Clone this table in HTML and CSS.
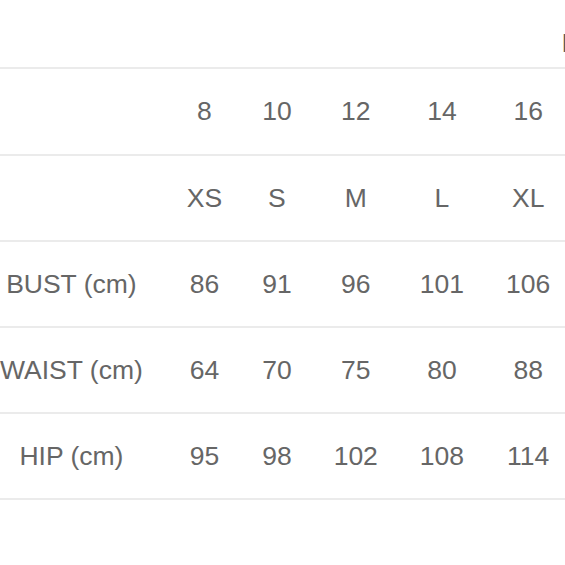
FILE: index.html
```html
<!DOCTYPE html>
<html lang="en">
<head>
<meta charset="utf-8">
<title>Size chart</title>
<link rel="stylesheet" href="styles.css">
</head>
<body>
<div class="viewport">
  <div class="chart-head"><span class="chart-title">International sizes</span></div>
  <table class="size-table">
    <tbody>
      <tr><td class="label"></td><td class="col-xs">8</td><td>10</td><td>12</td><td>14</td><td>16</td></tr>
      <tr><td class="label"></td><td class="col-xs">XS</td><td>S</td><td>M</td><td>L</td><td>XL</td></tr>
      <tr><td class="label">BUST (cm)</td><td class="col-xs">86</td><td>91</td><td>96</td><td>101</td><td>106</td></tr>
      <tr><td class="label">WAIST (cm)</td><td class="col-xs">64</td><td>70</td><td>75</td><td>80</td><td>88</td></tr>
      <tr><td class="label">HIP (cm)</td><td class="col-xs">95</td><td>98</td><td>102</td><td>108</td><td>114</td></tr>
    </tbody>
  </table>
</div>
</body>
</html>
```
FILE: styles.css
```css
html, body {
  margin: 0;
  padding: 0;
  background: #ffffff;
}
.viewport {
  width: 565px;
  height: 565px;
  overflow: hidden;
  font-family: "Liberation Sans", Arial, sans-serif;
  color: #666666;
}
.chart-head {
  height: 69px;
  border-bottom: 2px solid #ebebeb;
  display: flex;
  align-items: flex-start;
  padding: 30px 0 0 562px;
  white-space: nowrap;
  width: 800px;
  box-sizing: border-box;
}
.chart-title {
  font-size: 26.5px;
  font-weight: bold;
  color: #5a5a5a;
  line-height: 1;
}
.size-table {
  border-collapse: collapse;
  margin-left: -21px;
  font-size: 26.5px;
  white-space: nowrap;
}
.size-table tr {
  border-bottom: 2px solid #ebebeb;
}
.size-table td {
  height: 86px;
  padding: 0 21px;
  text-align: center;
  vertical-align: middle;
  box-sizing: border-box;
}
.size-table td.label {
  padding-right: 23px;
}
.size-table td.col-xs {
  padding-right: 19px;
}
.size-table td:last-child {
  padding-right: 60px;
}
```
